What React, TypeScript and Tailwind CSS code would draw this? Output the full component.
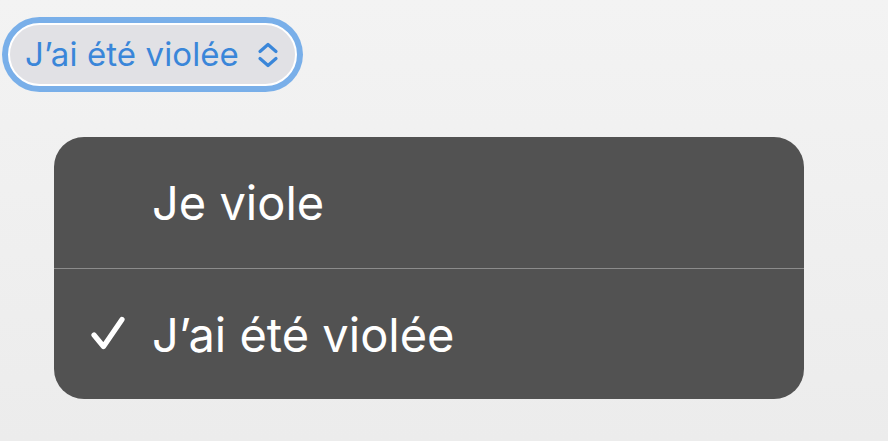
import { useState } from 'react';

const options = ['Je viole', 'J\u2019ai été violée'];

function Check() {
  return (
    <svg width="36" height="36" viewBox="0 0 36 36" fill="none" aria-hidden="true">
      <path
        d="M4 19 L13.5 30.5 L32 3.5"
        stroke="#ffffff"
        strokeWidth="5.2"
        strokeLinecap="round"
        strokeLinejoin="round"
      />
    </svg>
  );
}

function UpDown() {
  return (
    <svg width="22" height="26" viewBox="0 0 22 26" fill="none" aria-hidden="true">
      <path
        d="M3 9.5 L11 2.5 L19 9.5 M3 16.5 L11 23.5 L19 16.5"
        stroke="#3a86d9"
        strokeWidth="3.2"
        strokeLinecap="round"
        strokeLinejoin="round"
      />
    </svg>
  );
}

export default function App() {
  const [selected, setSelected] = useState(1);

  return (
    <div
      className="h-[441px] w-full overflow-hidden bg-[linear-gradient(180deg,#f3f3f3_0%,#ececec_100%)] pl-[2px] pt-[17px]"
      style={{ fontFamily: 'Inter, "Noto Sans", sans-serif' }}
    >
      <div className="inline-flex rounded-full bg-[#79afe9] p-[6px]">
        <div className="flex h-[63px] items-center gap-[18px] rounded-full border-2 border-white bg-[#e1e1e5] pl-[15px] pr-[16px]">
          <span className="text-[33px] leading-none tracking-[0.1px] text-[#3a86d9]">
            {options[selected]}
          </span>
          <UpDown />
        </div>
      </div>

      <div className="ml-[52px] mt-[45px] w-[750px] overflow-hidden rounded-[30px] bg-[#525252]">
        {options.map((label, i) => (
          <button
            key={label}
            type="button"
            onClick={() => setSelected(i)}
            className={`flex h-[131px] w-full items-center text-left ${
              i > 0 ? 'border-t border-[#8c8c8c]' : ''
            }`}
          >
            <span className="flex w-[98px] justify-end pr-[26px]">
              {selected === i ? <Check /> : null}
            </span>
            <span className="text-[47px] leading-none tracking-[0px] text-white">{label}</span>
          </button>
        ))}
      </div>
    </div>
  );
}
